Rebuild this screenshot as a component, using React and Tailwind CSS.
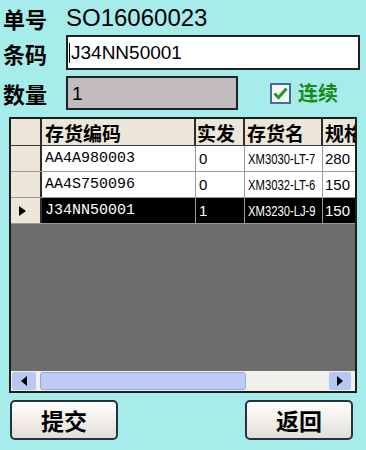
import React from "react";

const rows = [
  { code: "AA4A980003", qty: "0", name: "XM3030-LT-7", spec: "280" },
  { code: "AA4S750096", qty: "0", name: "XM3032-LT-6", spec: "150" },
  { code: "J34NN50001", qty: "1", name: "XM3230-LJ-9", spec: "150", active: true },
];

const cjk = "font-['Noto_Sans_CJK_SC',sans-serif]";

const App = () => {
  return (
    <div className="w-[366px] h-[450px] bg-[#a6ecea] overflow-hidden flex flex-col">
      {/* 单号 */}
      <div className="flex items-center h-[34px] pl-[3px] pt-[2px]">
        <span className={`${cjk} font-bold text-[22px] leading-none w-[63px] text-black`}>单号</span>
        <span className="font-['Liberation_Sans',sans-serif] text-[24px] leading-none text-black">SO16060023</span>
      </div>

      {/* 条码 */}
      <div className="flex items-center mt-[1px] pl-[3px]">
        <span className={`${cjk} font-bold text-[22px] leading-none w-[63px] text-black`}>条码</span>
        <div className="w-[294px] h-[35px] bg-white border-2 border-[#1e2220] flex items-center pl-[1px]">
          <span className="w-[1px] h-[20px] bg-black mr-[1px]"></span>
          <span className="font-['Liberation_Sans',sans-serif] text-[19px] leading-none text-black">J34NN50001</span>
        </div>
      </div>

      {/* 数量 */}
      <div className="flex items-center mt-[6px] pl-[3px]">
        <span className={`${cjk} font-bold text-[22px] leading-none w-[63px] text-black`}>数量</span>
        <div className="w-[172px] h-[34px] bg-[#c1bdbf] border-2 border-[#1e2220] flex items-center pl-[4px]">
          <span className="font-['Liberation_Sans',sans-serif] text-[19px] leading-none text-black">1</span>
        </div>
        <div className="ml-[32px] flex items-center gap-[7px]">
          <div className="w-[21px] h-[21px] border-2 border-[#4a6a93] bg-[#f4f6f8] flex items-center justify-center">
            <svg width="15" height="13" viewBox="0 0 15 13">
              <path d="M1.5 6.5 L5.5 10.5 L13.5 1.5" fill="none" stroke="#1f9a1f" strokeWidth="3" />
            </svg>
          </div>
          <span className={`${cjk} font-bold text-[20px] leading-none text-[#178a17]`}>连续</span>
        </div>
      </div>

      {/* Grid */}
      <div className="ml-[9px] mt-[7px] w-[348px] border-2 border-[#1d1d1d] bg-[#6e6c6c] flex flex-col overflow-hidden">
        <div className="flex h-[27px] bg-[#ece7d9] border-b border-[#3a3a3a]">
          <div className="w-[31px] shrink-0 border-r-2 border-[#2c2c2c]"></div>
          <div className={`w-[154px] shrink-0 border-r-2 border-[#2c2c2c] pl-[3px] flex items-center ${cjk} font-bold text-[19px] leading-none`}>存货编码</div>
          <div className={`w-[49px] shrink-0 border-r-2 border-[#2c2c2c] pl-[1px] flex items-center ${cjk} font-bold text-[19px] leading-none`}>实发</div>
          <div className={`w-[78px] shrink-0 border-r-2 border-[#2c2c2c] pl-[2px] flex items-center ${cjk} font-bold text-[19px] leading-none`}>存货名</div>
          <div className={`w-[60px] shrink-0 pl-[2px] flex items-center whitespace-nowrap ${cjk} font-bold text-[19px] leading-none`}>规格</div>
        </div>
        {rows.map((r, i) => (
          <div key={i} className={`flex h-[26px] border-b border-[#9a9a9a] ${r.active ? "bg-black text-white" : "bg-white text-black"}`}>
            <div className="w-[31px] shrink-0 bg-[#ece7d9] border-r-2 border-[#2c2c2c] flex items-center pl-[8px]">
              {r.active && (
                <svg width="7" height="10" viewBox="0 0 7 10">
                  <path d="M0 0 L7 5 L0 10 Z" fill="#000" />
                </svg>
              )}
            </div>
            <div className="w-[154px] shrink-0 border-r border-[#9a9a9a] pl-[3px] flex items-center font-['Liberation_Mono',monospace] text-[15px] leading-none">{r.code}</div>
            <div className="w-[49px] shrink-0 border-r border-[#9a9a9a] pl-[3px] flex items-center font-['Liberation_Sans',sans-serif] text-[15px] leading-none">{r.qty}</div>
            <div className="w-[78px] shrink-0 border-r border-[#9a9a9a] pl-[3px] flex items-center overflow-hidden whitespace-nowrap">
              <span className="inline-block origin-left scale-x-[0.75] font-['Liberation_Sans',sans-serif] text-[15px] leading-none">{r.name}</span>
            </div>
            <div className="w-[60px] shrink-0 pl-[2px] flex items-center font-['Liberation_Sans',sans-serif] text-[15px] leading-none">{r.spec}</div>
          </div>
        ))}
        <div className="h-[147px]"></div>
        {/* horizontal scrollbar */}
        <div className="h-[20px] bg-[#f1f0ea] flex items-stretch py-[1px] pr-[4px]">
          <div className="w-[24px] ml-[1px] bg-[#b8c8f2] rounded-[2px] flex items-center justify-center">
            <svg width="6" height="10" viewBox="0 0 6 10">
              <path d="M6 0 L0 5 L6 10 Z" fill="#000" />
            </svg>
          </div>
          <div className="w-[206px] ml-[4px] bg-[#bdccf6] border border-[#95a9e0] rounded-[3px]"></div>
          <div className="flex-1"></div>
          <div className="w-[22px] bg-[#b8c8f2] rounded-[2px] flex items-center justify-center">
            <svg width="6" height="10" viewBox="0 0 6 10">
              <path d="M0 0 L6 5 L0 10 Z" fill="#000" />
            </svg>
          </div>
        </div>
      </div>

      {/* Buttons */}
      <div className="flex justify-between mt-[7px] pl-[10px] pr-[13px]">
        <button className={`w-[108px] h-[40px] rounded-[5px] border-2 border-[#27313f] bg-gradient-to-b from-white to-[#e2ded6] ${cjk} font-bold text-[23px] leading-none text-black`}>提交</button>
        <button className={`w-[108px] h-[40px] rounded-[5px] border-2 border-[#27313f] bg-gradient-to-b from-white to-[#e2ded6] ${cjk} font-bold text-[23px] leading-none text-black`}>返回</button>
      </div>
    </div>
  );
};

export default App;
